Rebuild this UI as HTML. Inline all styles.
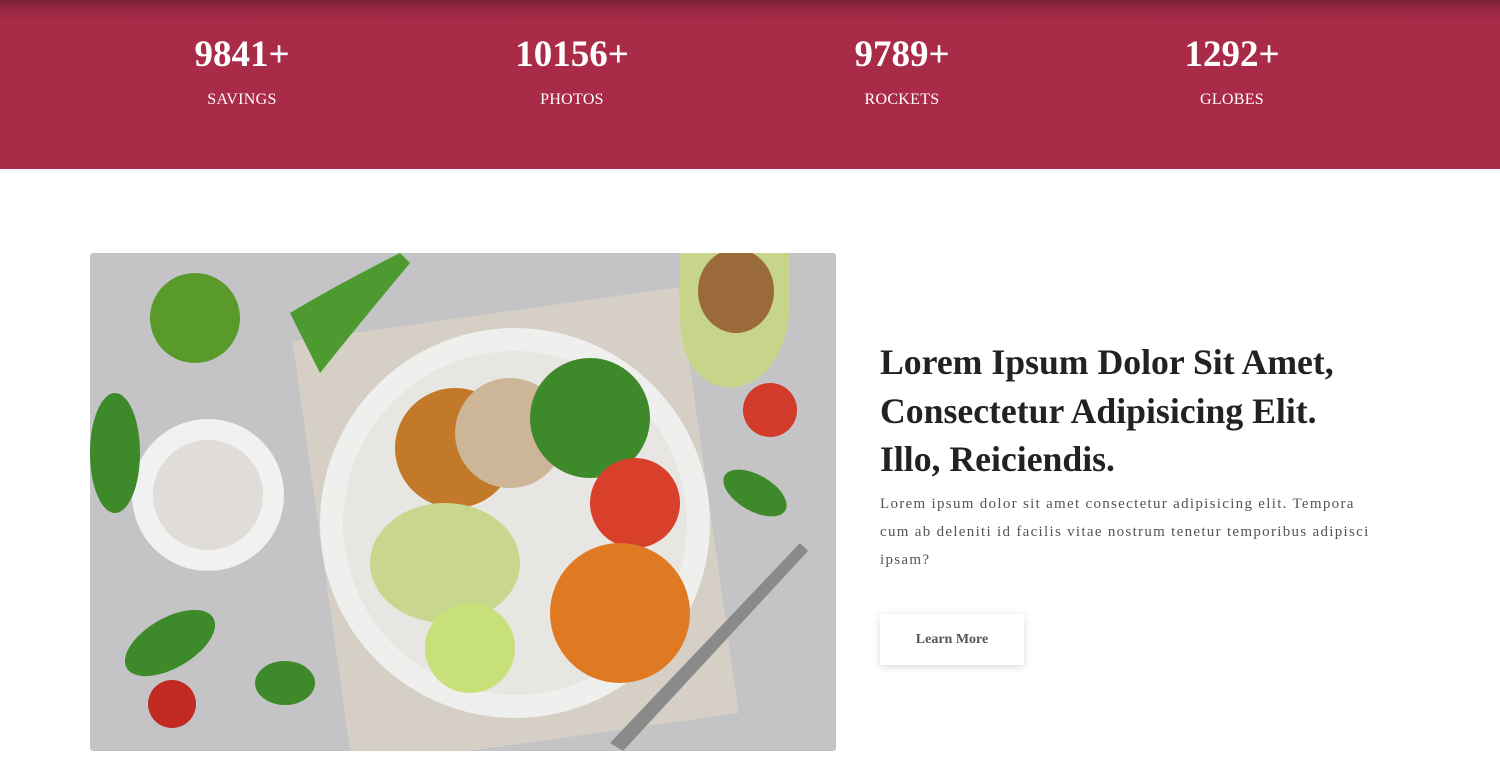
<!DOCTYPE html>
<html><head><meta charset="utf-8"><style>
*{margin:0;padding:0;box-sizing:border-box}
body{width:1500px;height:779px;overflow:hidden;background:#fff;font-family:"Liberation Serif",serif}
.band{position:absolute;left:0;top:0;width:1500px;height:169px;background:linear-gradient(#7a2035 0,#9a2843 10px,#a92b48 22px,#a92b48 100%)}
.stat{position:absolute;top:32px;width:300px;text-align:center;color:#fff}
.stat b{display:block;font-size:37px;line-height:46px}
.stat span{display:block;font-size:16px;margin-top:13px;letter-spacing:.3px}
.img{position:absolute;left:90px;top:253px;width:746px;height:498px;border-radius:3px;overflow:hidden}
h2{position:absolute;left:880px;top:338px;width:475px;font-size:35.7px;line-height:48.5px;color:#222;font-weight:bold}
p{position:absolute;left:880px;top:490px;width:505px;font-size:15px;line-height:28px;color:#555;letter-spacing:1.3px}
.btn{position:absolute;left:880px;top:614px;width:144px;height:51px;background:#fff;box-shadow:0 2px 8px rgba(0,0,0,.15);text-align:center;line-height:51px;font-weight:bold;font-size:14px;color:#555}
</style></head><body>
<div class="band">
<div class="stat" style="left:92px"><b>9841+</b><span>SAVINGS</span></div>
<div class="stat" style="left:422px"><b>10156+</b><span>PHOTOS</span></div>
<div class="stat" style="left:752px"><b>9789+</b><span>ROCKETS</span></div>
<div class="stat" style="left:1082px"><b>1292+</b><span>GLOBES</span></div>
</div>
<div class="img"><svg width="746" height="498" viewBox="0 0 746 498">
<rect width="746" height="498" fill="#c4c4c6"/>
<rect x="230" y="60" width="390" height="430" fill="#d6cfc6" transform="rotate(-8 420 270)"/>
<circle cx="105" cy="65" r="45" fill="#5a9a2a"/>
<path d="M590 0 h110 v60 q-10 70 -60 75 q-50 -5 -50 -75z" fill="#c6d58a"/>
<ellipse cx="646" cy="38" rx="38" ry="42" fill="#9a6a3a"/>
<circle cx="680" cy="157" r="27" fill="#d23a2a"/>
<circle cx="82" cy="451" r="24" fill="#c02a22"/>
<circle cx="118" cy="242" r="76" fill="#f1f1f1"/>
<circle cx="118" cy="242" r="55" fill="#e0dcd8"/>
<ellipse cx="25" cy="200" rx="25" ry="60" fill="#3e8a2a"/>
<ellipse cx="80" cy="390" rx="25" ry="50" fill="#3e8a2a" transform="rotate(60 80 390)"/>
<ellipse cx="195" cy="430" rx="30" ry="22" fill="#3e8a2a"/>
<ellipse cx="665" cy="240" rx="35" ry="18" fill="#3e8a2a" transform="rotate(30 665 240)"/>
<path d="M200 60 q50 -30 110 -60 l10 10 q-50 60 -90 110z" fill="#4c9a30"/>
<circle cx="425" cy="270" r="195" fill="#efefed"/>
<circle cx="425" cy="270" r="172" fill="#e8e6e2"/>
<circle cx="365" cy="195" r="60" fill="#c27a2a"/>
<circle cx="420" cy="180" r="55" fill="#cdb597"/>
<circle cx="500" cy="165" r="60" fill="#3e8a2a"/>
<circle cx="545" cy="250" r="45" fill="#d8402c"/>
<circle cx="530" cy="360" r="70" fill="#e07a22"/>
<ellipse cx="355" cy="310" rx="75" ry="60" fill="#c9d78e"/>
<circle cx="380" cy="395" r="45" fill="#c8e07a"/>
<path d="M520 490 l190 -200 l8 8 l-185 200z" fill="#8a8a8a"/>
</svg></div>
<h2>Lorem Ipsum Dolor Sit Amet, Consectetur Adipisicing Elit. Illo, Reiciendis.</h2>
<p>Lorem ipsum dolor sit amet consectetur adipisicing elit. Tempora cum ab deleniti id facilis vitae nostrum tenetur temporibus adipisci ipsam?</p>
<div class="btn">Learn More</div>
</body></html>
